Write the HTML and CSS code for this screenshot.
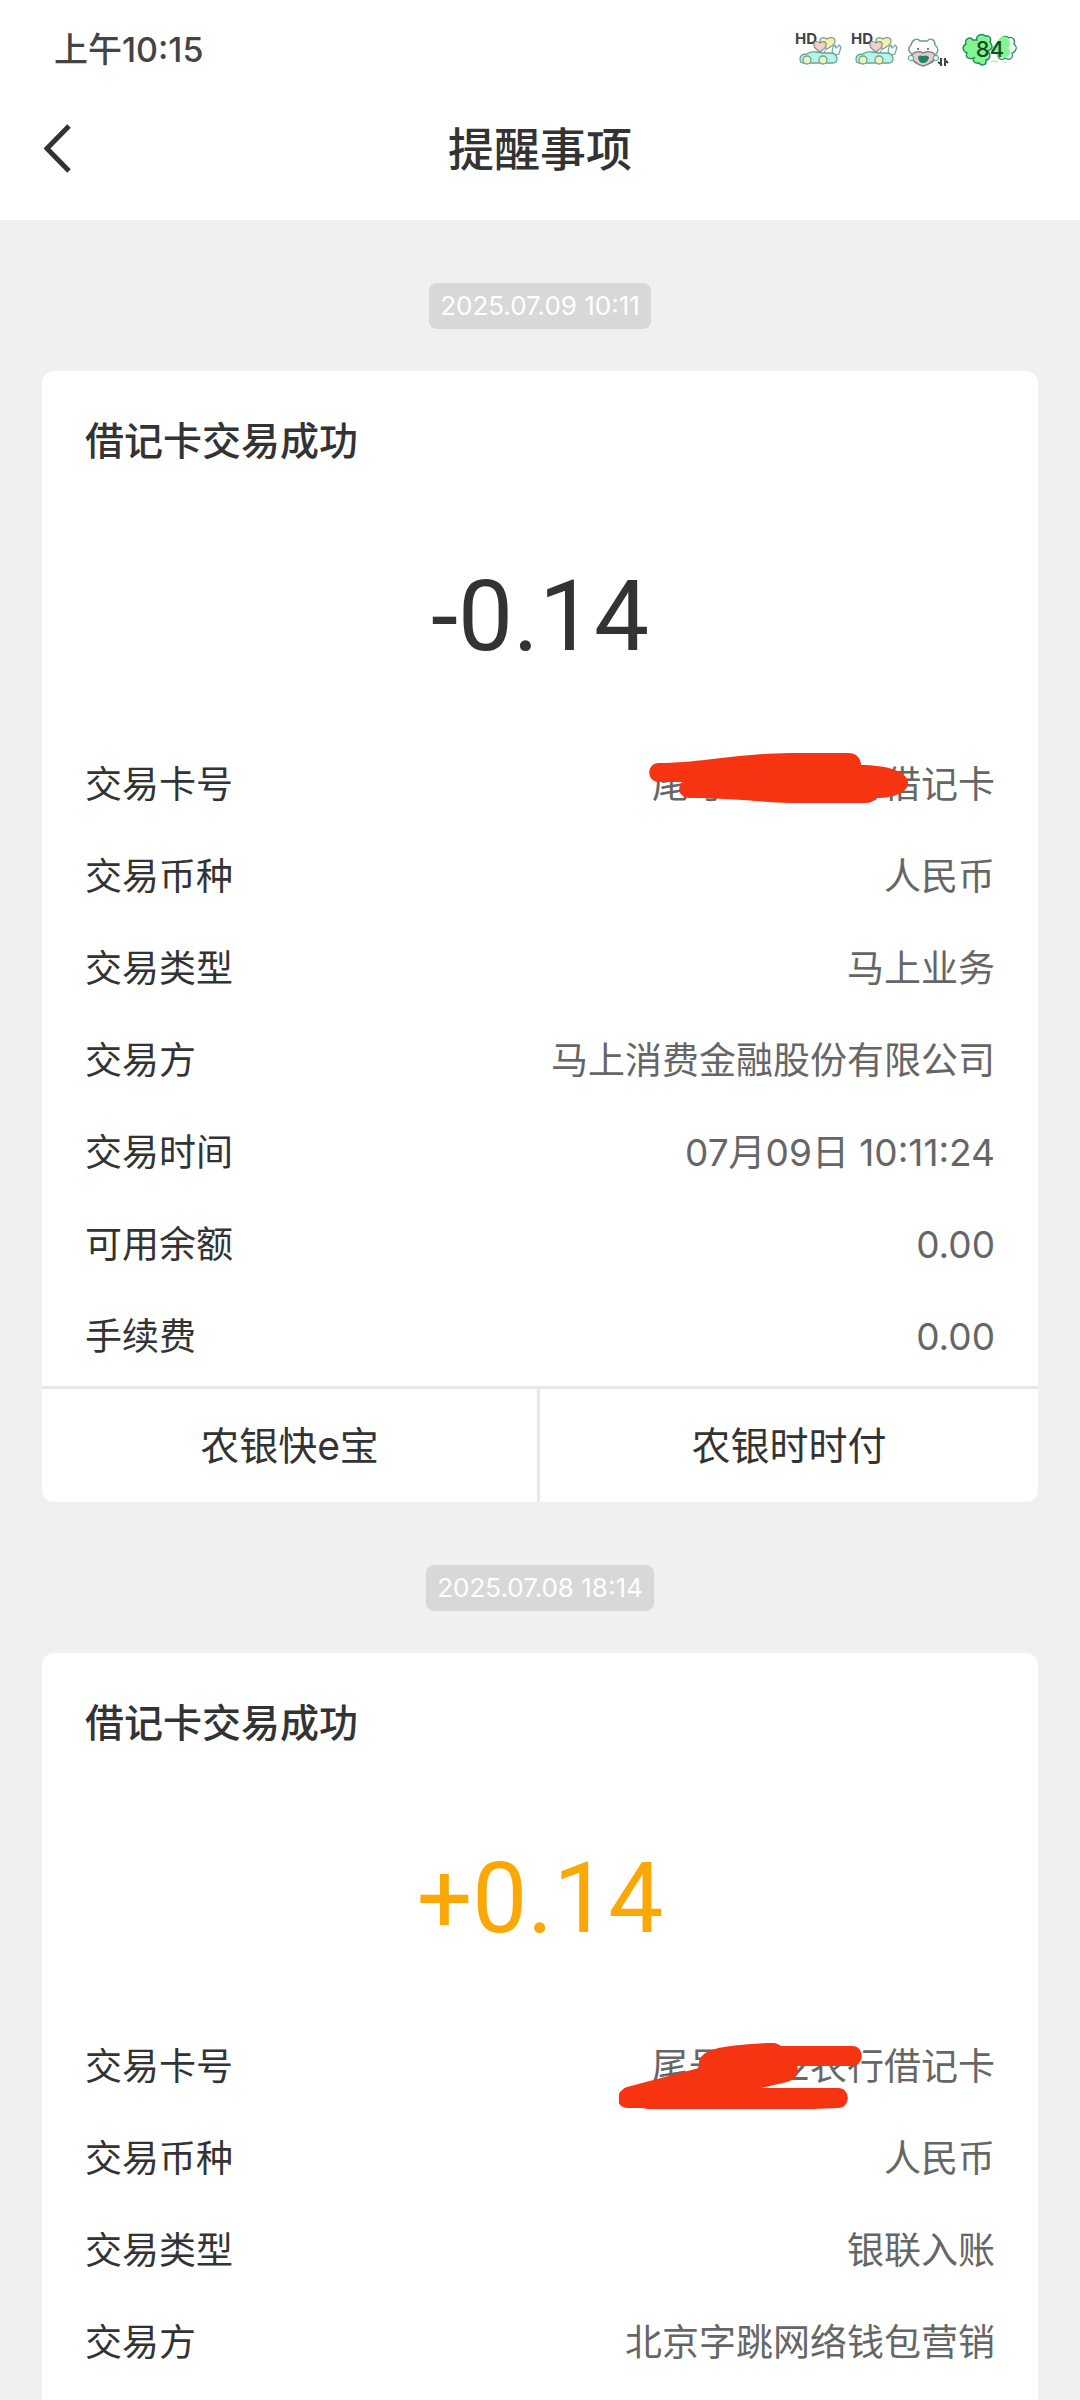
FILE: index.html
```html
<!DOCTYPE html>
<html lang="zh-CN">
<head>
<meta charset="utf-8">
<meta name="viewport" content="width=device-width, initial-scale=1">
<title>提醒事项</title>
<link rel="stylesheet" href="styles.css">
</head>
<body>
<svg class="defs" aria-hidden="true">
  <symbol id="car" viewBox="0 0 47 36">
    <path d="M26 13V23M33 14L28 22" stroke="#8a8f8c" stroke-width="1" fill="none"/>
    <path d="M32 17C27 13 24 11 25 8C26 5 30 5 32 7C34 5 39 5 40 8C41 12 36 15 32 17Z" fill="#f1f2ab" stroke="#7d9a8d" stroke-width="1.2"/>
    <path d="M25 20C20 17 18 14 19 11C20 9 23 9 25 11C27 9 31 9 31 12C32 15 28 18 25 20Z" fill="#f0cfd0" stroke="#84908c" stroke-width="1.2"/>
    <path d="M38 15L40 13L41 16L44 13L46 15L44 22L40 23L37 20Z" fill="#f4ffff" stroke="#6fa8a0" stroke-width="1.2"/>
    <path d="M5 27C5 23 9 22 12 22C15 19 18 20 21 20L28 21L35 21C40 21 42 23 42 27C42 30 41 31 38 31H8C6 31 5 30 5 27Z" fill="#b5f3e4" stroke="#66a69a" stroke-width="1.3"/>
    <circle cx="12" cy="28" r="4" fill="#f3f3b2" stroke="#66a69a" stroke-width="1.3"/>
    <circle cx="28" cy="28" r="4" fill="#f3f3b2" stroke="#66a69a" stroke-width="1.3"/>
  </symbol>
</svg>

<header class="header">
  <div class="status">
    <time class="clock">上午10:15</time>
    <div class="status-icons">
      <svg class="car" viewBox="0 0 47 36"><text class="hd-label" x="0" y="12">HD</text><use href="#car"/></svg>
      <svg class="car" viewBox="0 0 47 36"><text class="hd-label" x="0" y="12">HD</text><use href="#car"/></svg>
      <svg class="pet" viewBox="0 0 42 32" role="img" aria-label="Wi-Fi">
        <path d="M5 18C1 16 1 11 4 9C5 4 10 1 13 5H20C24 1 28 4 28 9C32 12 31 16 29 18C29 22 27 25 24 27H9C6 25 5 22 5 18Z" fill="#fff" stroke="#679b8e" stroke-width="1.4"/>
        <circle cx="11" cy="13" r="1" fill="#555"/><circle cx="21" cy="13" r="1" fill="#555"/>
        <path d="M16 30C9 28 5 24 5 20C6 15 13 15 16 17C20 15 27 15 28 20C28 24 22 29 16 30Z" fill="#e5cccb" stroke="#758983" stroke-width="1.4"/>
        <path d="M11 22C11 19 14 19 16 20C18 19 22 19 22 22C21 25 19 27 16 27C13 27 12 25 11 22Z" fill="#237f69"/>
        <circle cx="4" cy="22" r="2.6" fill="#d5fff5" stroke="#679b8e"/><circle cx="29" cy="22" r="2.6" fill="#d5fff5" stroke="#679b8e"/>
        <path d="M34 22V30M35 29L31 26M38 30V22M37 23L41 27" stroke="#444" stroke-width="2" fill="none"/>
      </svg>
      <div class="battery">
        <svg viewBox="0 0 56 34" aria-hidden="true">
          <path d="M38 8C39 3 44 2 47 5C50 3 54 7 52 11C56 14 54 19 50 20C52 25 47 28 43 25C40 28 36 26 36 22L30 17Z" fill="#f3fff4" stroke="#2f8a66" stroke-width="1.2"/>
          <path d="M36 8C38 3 43 2 46 6C49 8 48 13 46 15C50 18 48 24 43 24C39 26 35 24 34 21L28 16Z" fill="#82f590"/>
          <path d="M15 7C13 2 21 0 23 3C27 2 30 5 28 9C32 14 29 17 26 18C30 23 27 27 24 27C25 33 19 33 17 30C13 31 10 28 12 25C6 27 3 24 5 20C0 18 0 13 4 11C2 6 8 3 11 7Z" fill="#82f590" stroke="#258a61" stroke-width="1.4"/>
          <path d="M29 29C31 27 34 29 36 28M41 28L44 30" stroke="#b6f5a0" stroke-width="1.4" fill="none"/>
        </svg>
        <span class="battery-level">84</span>
      </div>
    </div>
  </div>
  <nav class="nav">
    <button class="back" type="button" aria-label="返回">
      <svg viewBox="0 0 28 50" aria-hidden="true"><path d="M25 2L3 24.500L25 47" fill="none" stroke="#333" stroke-width="5"/></svg>
    </button>
    <h1 class="title">提醒事项</h1>
  </nav>
</header>

<main class="feed">
  <time class="stamp">2025.07.09 10:11</time>
  <article class="card">
    <h2 class="card-title">借记卡交易成功</h2>
    <p class="amount">-0.14</p>
    <dl class="details">
      <div class="row"><dt>交易卡号</dt><dd class="masked">尾号<span class="gap gap-four"></span>农行借记卡
        <svg class="scribble" viewBox="-26 2 400 92" aria-hidden="true"><path d="M14 26C55 26 88 17 145 16H203C211 16 216 21 216 28C241 28 263 34 263 46C263 55 250 61 231 61C229 64 225 66 221 66H158C120 66 90 61 45 61C35 61 31 52 37 45H14C1 45 1 26 14 26Z" fill="#f63412"/></svg>
      </dd></div>
      <div class="row"><dt>交易币种</dt><dd>人民币</dd></div>
      <div class="row"><dt>交易类型</dt><dd>马上业务</dd></div>
      <div class="row"><dt>交易方</dt><dd>马上消费金融股份有限公司</dd></div>
      <div class="row"><dt>交易时间</dt><dd>07月09日 10:11:24</dd></div>
      <div class="row"><dt>可用余额</dt><dd>0.00</dd></div>
      <div class="row"><dt>手续费</dt><dd>0.00</dd></div>
    </dl>
    <div class="actions">
      <button class="action" type="button">农银快e宝</button>
      <button class="action" type="button">农银时时付</button>
    </div>
  </article>

  <time class="stamp">2025.07.08 18:14</time>
  <article class="card card-open">
    <h2 class="card-title">借记卡交易成功</h2>
    <p class="amount income">+0.14</p>
    <dl class="details">
      <div class="row"><dt>交易卡号</dt><dd class="masked">尾号<span class="gap gap-three"></span>2农行借记卡
        <svg class="scribble" viewBox="6 -6 400 92" aria-hidden="true"><path d="M86 38C85 27 98 22 111 20C130 17 147 16 160 16C164 16 166 18 168 19H239C252 19 252 39 239 39H184C187 47 182 53 174 55L148 61H225C238 61 238 81 225 81L200 82H35L29 81H15C2 81 1 65 14 60L86 41Z" fill="#f63412"/></svg>
      </dd></div>
      <div class="row"><dt>交易币种</dt><dd>人民币</dd></div>
      <div class="row"><dt>交易类型</dt><dd>银联入账</dd></div>
      <div class="row"><dt>交易方</dt><dd>北京字跳网络钱包营销</dd></div>
    </dl>
  </article>
</main>
</body>
</html>
```

FILE: styles.css
```css
* { box-sizing: border-box; }

body {
  margin: 0;
  background: #f0f0f0;
  color: #333;
  font-family: Inter, "Noto Sans CJK SC", sans-serif;
  font-size: 37px;
}

h1, h2, p, dl, dd { margin: 0; }

button {
  border: 0;
  padding: 0;
  background: none;
  color: inherit;
  font: inherit;
}

.defs { position: absolute; width: 0; height: 0; }

.header {
  background: #fff;
  padding-bottom: 22px;
}

.status {
  display: flex;
  align-items: center;
  justify-content: space-between;
  height: 100px;
  padding: 0 62px 0 54px;
}

.clock {
  font-size: 34px;
  font-weight: 500;
  line-height: 52px;
  color: #444;
}

.status-icons { display: flex; align-items: center; gap: 9px; }
.car { width: 47px; height: 36px; }
.hd-label { font: 700 15px Inter, sans-serif; fill: #444; }
.pet { width: 42px; height: 32px; margin-top: 4px; }
.battery { position: relative; width: 56px; height: 34px; margin-left: 4px; }
.battery svg { display: block; width: 100%; height: 100%; }
.battery-level {
  position: absolute;
  inset: 0;
  font-size: 22px;
  font-weight: 500;
  line-height: 32px;
  text-align: center;
  color: #174a28;
}

.nav {
  display: grid;
  grid-template-columns: 1fr auto 1fr;
  align-items: center;
  height: 98px;
  padding: 0 44px;
}

.back { width: 28px; height: 50px; }
.back svg { display: block; width: 28px; height: 50px; }
.title { font-size: 46px; font-weight: 500; line-height: 66px; }

.feed {
  display: flex;
  flex-direction: column;
  align-items: center;
  padding: 0 42px;
}

.stamp {
  margin: 63px 0 42px;
  padding: 0 11px;
  border-radius: 8px;
  background: #d8d8d8;
  color: #fff;
  font-size: 26px;
  line-height: 46px;
}

.card {
  width: 100%;
  border-radius: 12px;
  background: #fff;
  overflow: hidden;
}

.card-title {
  padding: 42px 43px 0;
  font-size: 39px;
  font-weight: 500;
  line-height: 56px;
}

.amount {
  padding: 78px 0 52px;
  font-family: Roboto, sans-serif;
  font-size: 98px;
  line-height: 140px;
  text-align: center;
}

.income { color: #faa805; }

.details { padding: 0 43px 3px; }

.card-open { border-radius: 12px 12px 0 0; }
.card-open .details { padding-bottom: 12px; }

.row {
  display: flex;
  justify-content: space-between;
  line-height: 92px;
}

.row dd { color: #666; }

.masked { position: relative; white-space: nowrap; }
.gap { display: inline-block; }
.gap-four { width: 84px; }
.gap-three { width: 62px; }

/* Hand-drawn strokes lie over the card number */
.scribble {
  position: absolute;
  top: 0;
  right: -24px;
  width: 400px;
  height: 92px;
}

.actions {
  display: grid;
  grid-template-columns: 1fr 1fr;
  border-top: 3px solid #e8e8e8;
}

.action {
  height: 113px;
  padding-bottom: 6px;
  font-size: 39px;
}

.action:first-child { border-right: 3px solid #e8e8e8; }
```
